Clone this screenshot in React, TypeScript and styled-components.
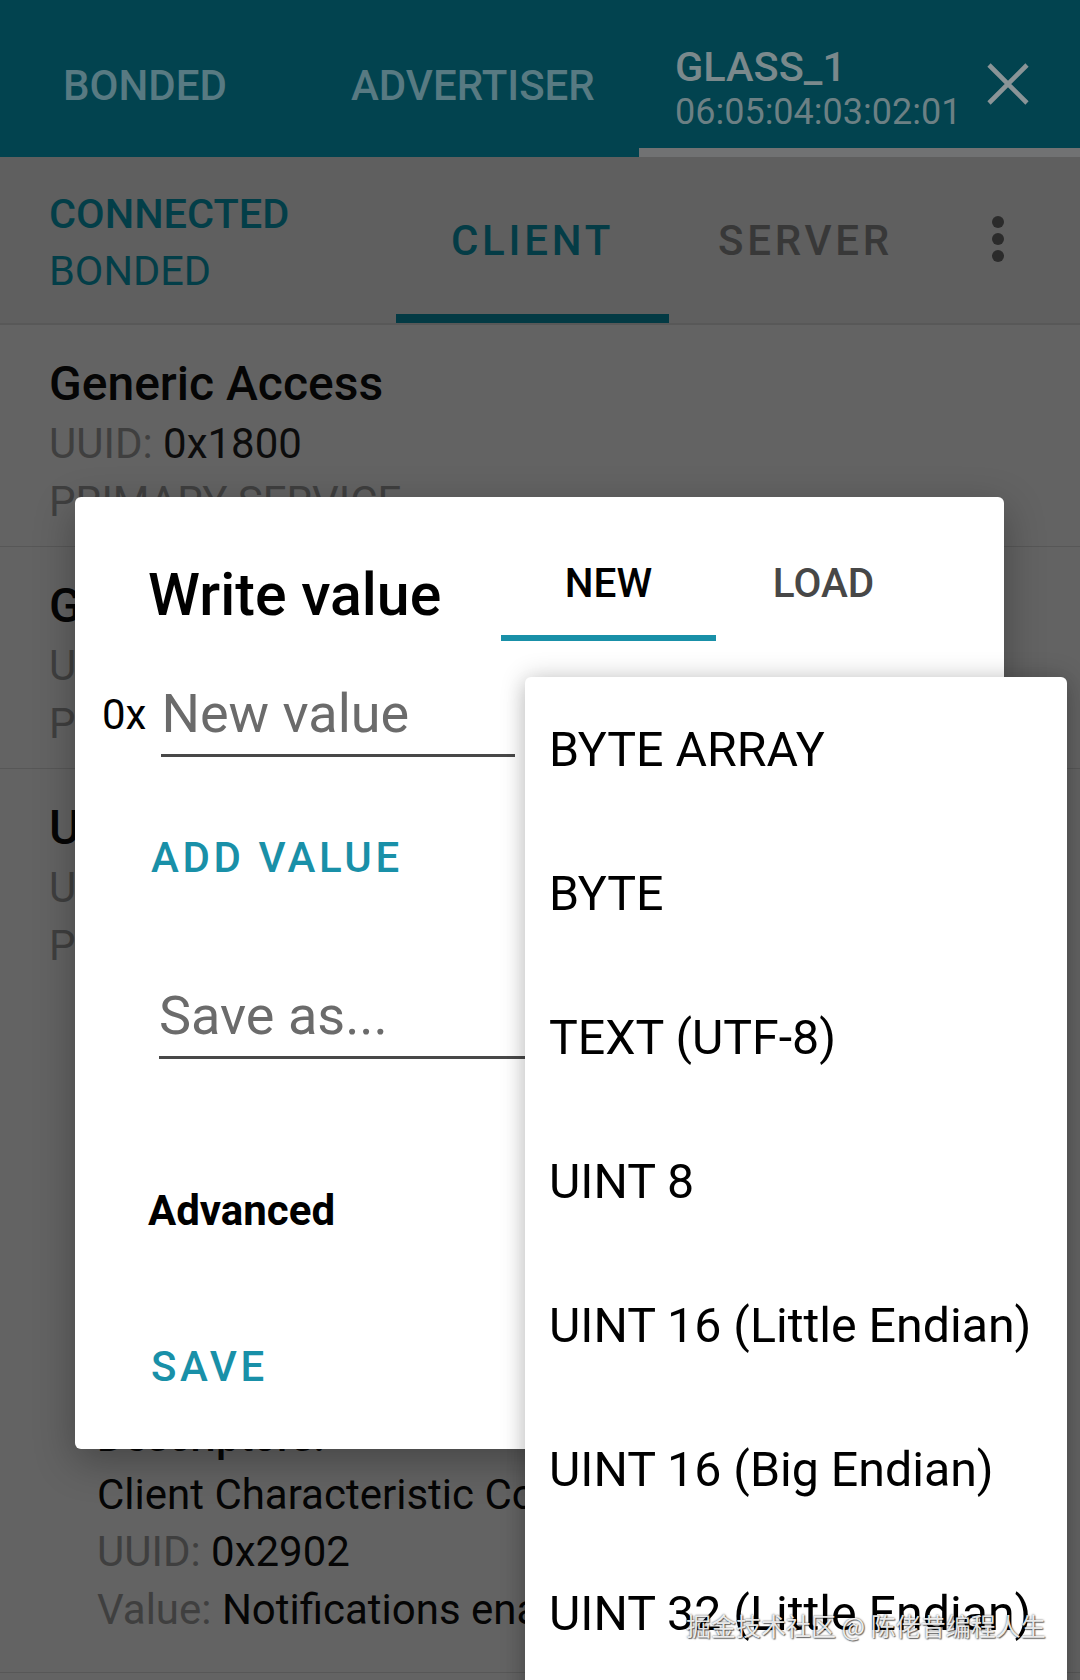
import styled, { createGlobalStyle } from "styled-components"

const GlobalStyle = createGlobalStyle`
  html, body {
    margin: 0;
    padding: 0;
    background: #636363;
    font-family: Roboto, "Noto Sans", sans-serif;
  }
  * { box-sizing: border-box; }
`

const Screen = styled.div`
  position: relative;
  width: 1080px;
  height: 1680px;
  overflow: hidden;
  background: #636363;
`

/* ---------- top device tab bar ---------- */

const TopBar = styled.div`
  display: flex;
  height: 157px;
  background: #02434f;
`

const TopTab = styled.div<{ $pad: number; $width?: number; $active?: boolean }>`
  flex: ${(p) => (p.$width ? `0 0 ${p.$width}px` : "1")};
  display: flex;
  justify-content: space-between;
  height: 157px;
  padding-left: ${(p) => p.$pad}px;
  border-bottom: 9px solid ${(p) => (p.$active ? "#717273" : "transparent")};
`

const TopTabLabel = styled.div`
  margin-top: 62px;
  font-size: 42px;
  line-height: 48px;
  font-weight: 500;
  color: #587a82;
`

const DeviceInfo = styled.div`
  display: flex;
  flex-direction: column;
  padding-top: 43px;
`

const DeviceName = styled.div`
  font-size: 41.5px;
  line-height: 48px;
  font-weight: 500;
  color: #7a898c;
`

const DeviceAddress = styled.div`
  font-size: 36px;
  line-height: 43px;
  color: #6c8084;
`

const CloseButton = styled.div`
  margin-top: 63px;
  margin-right: 50px;
  width: 44px;
  height: 42px;
`

/* ---------- connection sub bar ---------- */

const SubBar = styled.div`
  display: flex;
  height: 168px;
  background: #5f5f5f;
  border-bottom: 2px solid #585858;
`

const ConnState = styled.div`
  flex: 0 0 396px;
  padding: 28px 0 0 49px;
  color: #033e48;
`

const ConnLine = styled.div<{ $bold?: boolean }>`
  font-size: 41.5px;
  line-height: 57px;
  font-weight: ${(p) => (p.$bold ? 500 : 400)};
`

const SubTab = styled.div<{ $active?: boolean }>`
  flex: 0 0 273px;
  display: flex;
  align-items: center;
  justify-content: center;
  padding-top: 9px;
  border-bottom: 9px solid ${(p) => (p.$active ? "#033a44" : "transparent")};
  font-size: 42px;
  font-weight: 500;
  letter-spacing: 0.09em;
  color: ${(p) => (p.$active ? "#043c46" : "#383838")};
`

const OverflowButton = styled.div`
  flex: 1;
  display: flex;
  align-items: center;
  justify-content: center;
  padding-right: 26px;
`

/* ---------- service list ---------- */

const ServiceItem = styled.div<{ $fixed?: boolean }>`
  height: ${(p) => (p.$fixed ? "222px" : "auto")};
  padding: 30px 0 ${(p) => (p.$fixed ? "17px" : "34px")} 49px;
  border-bottom: 1px solid #575757;
  white-space: nowrap;
  overflow: hidden;
`

const ServiceTitle = styled.div`
  font-size: 48px;
  line-height: 58px;
  font-weight: 500;
  color: #050505;
`

const InfoLine = styled.div`
  font-size: 42px;
  line-height: 58px;
  padding-top: 2px;
  margin-bottom: -2px;
  color: #3f3f3f;
`

const Value = styled.span`
  color: #0c0c0c;
`

const Characteristic = styled.div`
  margin-top: 205px;
  padding-left: 48px;
`

const CharTitle = styled.div`
  font-size: 48px;
  line-height: 57.5px;
  font-weight: 500;
  color: #050505;
`

const CharLine = styled.div<{ $bold?: boolean }>`
  font-size: 42px;
  line-height: 57.5px;
  font-weight: ${(p) => (p.$bold ? 500 : 400)};
  color: ${(p) => (p.$bold ? "#050505" : "#3f3f3f")};
`

const CharText = styled.span`
  color: #050505;
`

/* ---------- write value dialog ---------- */

const Dialog = styled.div`
  position: absolute;
  left: 75px;
  top: 497px;
  width: 929px;
  background: #ffffff;
  border-radius: 6px;
  box-shadow: 0 12px 40px rgba(0, 0, 0, 0.3);
  padding-bottom: 57px;
`

const DialogHeader = styled.div`
  display: flex;
  height: 144px;
`

const DialogTitle = styled.div`
  flex: 0 0 426px;
  padding: 62px 0 0 73px;
  font-size: 59px;
  line-height: 72px;
  font-weight: 500;
  color: #000;
`

const DialogTab = styled.div<{ $active?: boolean }>`
  flex: 0 0 215px;
  height: 144px;
  padding-top: 61px;
  text-align: center;
  font-size: 40.5px;
  line-height: 50px;
  font-weight: 500;
  color: ${(p) => (p.$active ? "#000" : "#474747")};
  border-bottom: 6px solid ${(p) => (p.$active ? "#1990a8" : "transparent")};
`

const InputRow = styled.div`
  display: flex;
  align-items: flex-start;
  margin-top: 41px;
  padding-left: 27px;
`

const Prefix = styled.div`
  margin-top: 8px;
  margin-right: 15px;
  font-size: 42px;
  line-height: 50px;
  color: #000;
`

const Field = styled.div<{ $width: number; $indent?: number; $top?: number }>`
  width: ${(p) => p.$width}px;
  margin-left: ${(p) => p.$indent ?? 0}px;
  margin-top: ${(p) => p.$top ?? 0}px;
  padding-bottom: 8px;
  border-bottom: 3px solid #484848;
  font-size: 54px;
  line-height: 64px;
  color: #6b6b6b;
`

const TextButton = styled.div<{ $top: number }>`
  margin-top: ${(p) => p.$top}px;
  padding-left: 76px;
  font-size: 42px;
  line-height: 50px;
  font-weight: 500;
  letter-spacing: 0.085em;
  color: #1990a8;
`

const SectionLabel = styled.div`
  margin-top: 127px;
  padding-left: 73px;
  font-size: 42px;
  line-height: 50px;
  font-weight: 700;
  color: #000;
`

/* ---------- data type popup ---------- */

const Popup = styled.div`
  position: absolute;
  left: 525px;
  top: 677px;
  width: 542px;
  height: 1040px;
  padding-top: 1px;
  background: #ffffff;
  border-radius: 6px;
  box-shadow: 0 0 26px rgba(0, 0, 0, 0.2), 0 8px 20px rgba(0, 0, 0, 0.12);
`

const PopupItem = styled.div`
  display: flex;
  align-items: center;
  height: 144px;
  padding-left: 24px;
  font-size: 48.3px;
  line-height: 56px;
  color: #000;
  white-space: nowrap;
`

const Watermark = styled.div`
  position: absolute;
  left: 686px;
  top: 1609px;
  font-family: "Noto Sans CJK SC", sans-serif;
  font-size: 25px;
  line-height: 32px;
  color: rgba(255, 255, 255, 0.9);
  text-shadow: 0 0 2px rgba(0, 0, 0, 0.7), 1px 1px 1px rgba(0, 0, 0, 0.5);
  white-space: nowrap;
`

const CloseIcon = () => (
	<svg width="44" height="42" viewBox="0 0 44 42">
		<path d="M3 2 L41 40 M41 2 L3 40" stroke="#8a9497" strokeWidth="4.6" fill="none" />
	</svg>
)

const MoreIcon = () => (
	<svg width="14" height="50" viewBox="0 0 14 50">
		<circle cx="7" cy="7" r="6" fill="#2b2b2b" />
		<circle cx="7" cy="24" r="6" fill="#2b2b2b" />
		<circle cx="7" cy="41" r="6" fill="#2b2b2b" />
	</svg>
)

const services = [
	{ name: "Generic Access", uuid: "0x1800" },
	{ name: "Generic Attribute", uuid: "0x1801" },
]

const dataTypes = [
	"BYTE ARRAY",
	"BYTE",
	"TEXT (UTF-8)",
	"UINT 8",
	"UINT 16 (Little Endian)",
	"UINT 16 (Big Endian)",
	"UINT 32 (Little Endian)",
]

export default function App() {
	return (
		<>
			<GlobalStyle />
			<Screen>
				<TopBar>
					<TopTab $pad={63} $width={287}>
						<TopTabLabel>BONDED</TopTabLabel>
					</TopTab>
					<TopTab $pad={64} $width={352}>
						<TopTabLabel>ADVERTISER</TopTabLabel>
					</TopTab>
					<TopTab $pad={36} $active>
						<DeviceInfo>
							<DeviceName>GLASS_1</DeviceName>
							<DeviceAddress>06:05:04:03:02:01</DeviceAddress>
						</DeviceInfo>
						<CloseButton>
							<CloseIcon />
						</CloseButton>
					</TopTab>
				</TopBar>

				<SubBar>
					<ConnState>
						<ConnLine $bold>CONNECTED</ConnLine>
						<ConnLine>BONDED</ConnLine>
					</ConnState>
					<SubTab $active>CLIENT</SubTab>
					<SubTab>SERVER</SubTab>
					<OverflowButton>
						<MoreIcon />
					</OverflowButton>
				</SubBar>

				{services.map((s) => (
					<ServiceItem $fixed key={s.uuid}>
						<ServiceTitle>{s.name}</ServiceTitle>
						<InfoLine>
							UUID: <Value>{s.uuid}</Value>
						</InfoLine>
						<InfoLine>PRIMARY SERVICE</InfoLine>
					</ServiceItem>
				))}

				<ServiceItem>
					<ServiceTitle>Unknown Service</ServiceTitle>
					<InfoLine>
						UUID: <Value>0000ffe0-0000-1000-8000-00805f9b34fb</Value>
					</InfoLine>
					<InfoLine>PRIMARY SERVICE</InfoLine>
					<Characteristic>
						<CharTitle>Unknown Characteristic</CharTitle>
						<CharLine>
							UUID: <CharText>0000ffe1-0000-1000-8000-00805f9b34fb</CharText>
						</CharLine>
						<CharLine>
							Properties: <CharText>NOTIFY, WRITE</CharText>
						</CharLine>
						<CharLine>
							Value: <CharText>(0x) 01</CharText>
						</CharLine>
						<CharLine $bold>Descriptors:</CharLine>
						<CharLine>
							<CharText>Client Characteristic Configuration</CharText>
						</CharLine>
						<CharLine>
							UUID: <CharText>0x2902</CharText>
						</CharLine>
						<CharLine>
							Value: <CharText>Notifications enabled</CharText>
						</CharLine>
					</Characteristic>
				</ServiceItem>

				<Dialog>
					<DialogHeader>
						<DialogTitle>Write value</DialogTitle>
						<DialogTab $active>NEW</DialogTab>
						<DialogTab>LOAD</DialogTab>
					</DialogHeader>
					<InputRow>
						<Prefix>0x</Prefix>
						<Field $width={354}>New value</Field>
					</InputRow>
					<TextButton $top={76}>ADD VALUE</TextButton>
					<Field $width={770} $indent={84} $top={101}>
						Save as...
					</Field>
					<SectionLabel>Advanced</SectionLabel>
					<TextButton $top={106}>SAVE</TextButton>
				</Dialog>

				<Popup>
					{dataTypes.map((t) => (
						<PopupItem key={t}>{t}</PopupItem>
					))}
				</Popup>

				<Watermark>掘金技术社区 @ 陈佬昔编程人生</Watermark>
			</Screen>
		</>
	)
}
